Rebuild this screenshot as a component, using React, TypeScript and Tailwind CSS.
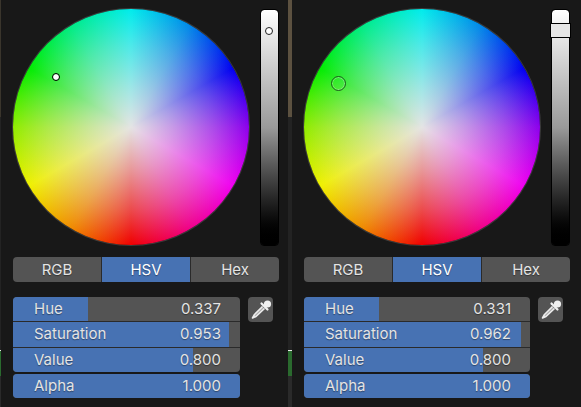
const FONT = "font-['Inter','Noto_Sans',sans-serif]";

function Wheel({ children }: { children: React.ReactNode }) {
  return (
    <div className="relative h-[236px] w-[236px] shrink-0 rounded-full bg-[radial-gradient(circle_closest-side,#e4e4e4_0%,#e4e4e4ad_35%,#e4e4e454_70%,#e4e4e400_100%),conic-gradient(#00ecec,#0088e8_30deg,#0000f0_60deg,#8c00ec_90deg,#f000f0_120deg,#f00088_150deg,#f00000_180deg,#f08800_210deg,#f0f000_240deg,#90ec00_270deg,#00ec00_300deg,#00ec88_330deg,#00ecec_360deg)] shadow-[0_0_0_1px_#3c3c3c]">
      {children}
    </div>
  );
}

function ValueStrip({ children }: { children?: React.ReactNode }) {
  return (
    <div className="relative h-[235px] w-[17px] shrink-0 rounded-[3px] bg-gradient-to-b from-white via-[#9a9a9a] to-black outline outline-1 outline-black">
      {children}
    </div>
  );
}

function Tabs() {
  return (
    <div className="flex h-[25px] w-[266px] overflow-hidden rounded-[4px] pt-0 text-[15px] text-[#e4e4e4] [text-shadow:0_1px_1px_#0006]">
      <div className="flex flex-1 items-center justify-center bg-[#545454] pt-px">RGB</div>
      <div className="flex flex-1 items-center justify-center border-x border-[#2a2a2a] bg-[#4772b3] pt-px text-white">HSV</div>
      <div className="flex flex-1 items-center justify-center bg-[#545454] pt-px">Hex</div>
    </div>
  );
}

function Field({ label, value, pct, className }: { label: string; value: string; pct: number; className?: string }) {
  return (
    <div className={`relative flex items-center justify-between overflow-hidden bg-[#545454] pl-[21px] pr-[19px] text-[15px] text-[#e4e4e4] [text-shadow:0_1px_1px_#0006] ${className ?? ""}`}>
      <div className="absolute inset-y-0 left-0 bg-[#4772b3]" style={{ width: `${pct}%` }} />
      <span className="relative">{label}</span>
      <span className="relative">{value}</span>
    </div>
  );
}

function Eyedropper() {
  return (
    <div className="flex h-[25px] w-[25px] items-center justify-center rounded-[4px] bg-[#545454]">
      <svg width="25" height="25" viewBox="0 0 25 25" fill="none">
        <circle cx="19.5" cy="7" r="3.6" fill="#f0f0f0" />
        <path d="M13.5 6.5 L19.5 12.5" stroke="#f0f0f0" strokeWidth="2.2" strokeLinecap="round" />
        <path d="M14.5 9.5 L6.5 17.5 L4.5 21 L8 19.5 L16.5 11.5" stroke="#ececec" strokeWidth="1.6" fill="#a8a8a8" strokeLinejoin="round" />
      </svg>
    </div>
  );
}

function Panel({ hue, sat, huePct, satPct, wheelKnob, stripKnob, className, fieldWidth }: {
  hue: string; sat: string; huePct: number; satPct: number; wheelKnob: React.ReactNode; stripKnob: React.ReactNode; className: string; fieldWidth: string;
}) {
  return (
    <div className={`flex shrink-0 flex-col ${className}`}>
      <div className="flex items-start pt-[9px]">
        <Wheel>{wheelKnob}</Wheel>
        <div className="ml-[12px] mt-px">
          <ValueStrip>{stripKnob}</ValueStrip>
        </div>
      </div>
      <div className="mt-[12px]"><Tabs /></div>
      <div className="mt-[15px] flex items-start gap-[8px]">
        <div className={`flex flex-col ${fieldWidth}`}>
          <Field label="Hue" value={hue} pct={huePct} className="h-[25px] rounded-t-[4px] border-b border-[#2a2a2a]" />
          <Field label="Saturation" value={sat} pct={satPct} className="h-[26px] border-b border-[#2a2a2a]" />
          <Field label="Value" value="0.800" pct={79.3} className="h-[24px] rounded-b-[4px]" />
          <Field label="Alpha" value="1.000" pct={100} className="mt-[2px] h-[24px] rounded-[4px]" />
        </div>
        <Eyedropper />
      </div>
    </div>
  );
}

// thin editor borders between the two pickers
function Divider({ className, topColor }: { className: string; topColor: string }) {
  return (
    <div className={`flex h-full shrink-0 flex-col ${className}`}>
      <div className={`h-[117px] ${topColor}`} />
      <div className="h-[233px] bg-[#232323]" />
      <div className="h-[26px] border-t border-[#e8e8e8] bg-[#2a6a2e]" />
      <div className="flex-1 bg-[#2a2a2a]" />
    </div>
  );
}

export default function App() {
  return (
    <div className={`flex h-[407px] w-[581px] overflow-hidden bg-[#181818] ${FONT}`}>
      <Divider className="w-px" topColor="bg-[#3a352c]" />
      <Panel
        className="w-[287px] pl-[12px]"
        fieldWidth="w-[227px]"
        hue="0.337"
        sat="0.953"
        huePct={33}
        satPct={95.3}
        wheelKnob={<div className="absolute left-[40px] top-[65px] h-[6px] w-[6px] rounded-full bg-white outline outline-1 outline-black" />}
        stripKnob={<div className="absolute left-[5px] top-[18px] h-[6px] w-[6px] rounded-full bg-white outline outline-1 outline-[#222]" />}
      />
      <Divider className="w-[4px]" topColor="bg-[#5c5140]" />
      <Panel
        className="w-[289px] pl-[12px]"
        fieldWidth="w-[226px]"
        hue="0.331"
        sat="0.962"
        huePct={33}
        satPct={96.2}
        wheelKnob={<div className="absolute left-[27px] top-[67px] h-[15px] w-[15px] rounded-full border border-[#1c5c1c] shadow-[inset_0_0_0_1px_#ffffff50]" />}
        stripKnob={<div className="absolute -left-px top-[14px] h-[13px] w-[19px] bg-[#e6e6e6] outline outline-1 outline-black" />}
      />
    </div>
  );
}
